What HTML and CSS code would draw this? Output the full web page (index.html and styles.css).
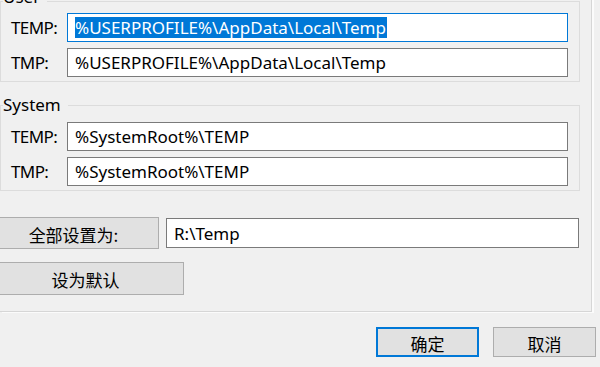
FILE: index.html
```html
<!DOCTYPE html>
<html lang="zh-CN">
<head>
<meta charset="utf-8">
<title>Temp</title>
<link rel="stylesheet" href="styles.css">
</head>
<body>
<div class="dialog">
  <div class="panel">
    <fieldset class="group group-user">
      <legend class="legend legend-user">User</legend>
      <div class="row">
        <span class="label">TEMP:</span>
        <div class="input input-focus"><span class="sel">%USERPROFILE%\AppData\Local\Temp</span></div>
      </div>
      <div class="row">
        <span class="label">TMP:</span>
        <div class="input">%USERPROFILE%\AppData\Local\Temp</div>
      </div>
    </fieldset>
    <fieldset class="group group-system">
      <legend class="legend">System</legend>
      <div class="row">
        <span class="label">TEMP:</span>
        <div class="input">%SystemRoot%\TEMP</div>
      </div>
      <div class="row">
        <span class="label">TMP:</span>
        <div class="input">%SystemRoot%\TEMP</div>
      </div>
    </fieldset>
    <div class="setall">
      <button class="btn btn-setall">全部设置为:</button>
      <div class="input input-setall">R:\Temp</div>
    </div>
    <button class="btn btn-default">设为默认</button>
  </div>
  <div class="footer">
    <button class="btn btn-foot btn-ok">确定</button>
    <button class="btn btn-foot">取消</button>
  </div>
</div>
</body>
</html>
```

FILE: styles.css
```css
html, body {
  margin: 0;
  padding: 0;
  background: #f0f0f0;
  overflow: hidden;
}
body {
  width: 600px;
  height: 367px;
  font-family: "Noto Sans", "Noto Sans CJK SC", sans-serif;
  font-size: 17px;
  color: #000;
}
.dialog {
  width: 600px;
  height: 367px;
  overflow: hidden;
}
.panel {
  width: 591px;
  margin-top: -13px;
  padding-bottom: 16px;
  border-right: 1px solid #d6d6d6;
  border-bottom: 1px solid #d6d6d6;
  box-shadow: 2px 1px 0 #fbfbfb;
}
.group {
  margin: 0;
  width: 580px;
  box-sizing: border-box;
  border: 1px solid #dcdcdc;
  padding: 0 11px 4px 9px;
  display: flex;
  flex-direction: column;
  gap: 6px;
  min-inline-size: 0;
}
.group-system {
  margin-top: 13px;
  padding-top: 7px;
}
.legend {
  padding: 0 7px 0 0;
  margin-left: -7px;
  line-height: 20px;
  font-size: 17px;
}
.legend-user {
  padding-bottom: 8px;
  margin-bottom: -2px;
}
.row {
  display: flex;
  align-items: center;
  height: 29px;
}
.label {
  width: 56px;
  padding-left: 1px;
  letter-spacing: -0.6px;
  flex: none;
}
.input {
  flex: 1;
  height: 29px;
  box-sizing: border-box;
  background: #fff;
  border: 1px solid #7a7a7a;
  padding-left: 7px;
  display: flex;
  align-items: center;
  white-space: nowrap;
  overflow: hidden;
}
.input-focus {
  border-color: #0078d7;
}
.sel {
  background: #0078d7;
  color: #fff;
  line-height: 21px;
  padding-right: 1px;
}
.btn {
  display: flex;
  align-items: center;
  justify-content: center;
  box-sizing: border-box;
  background: #e1e1e1;
  border: 1px solid #adadad;
  font-family: "Noto Sans CJK SC", sans-serif;
  font-size: 17px;
  color: #000;
  padding: 2px 0 0;
  margin: 0;
}
.setall {
  display: flex;
  align-items: center;
  gap: 7px;
  margin-top: 26px;
}
.btn-setall {
  width: 171px;
  height: 32px;
  margin-left: -12px;
  flex: none;
}
.input-setall {
  flex: none;
  width: 413px;
  height: 30px;
}
.btn-default {
  width: 197px;
  height: 33px;
  margin-left: -13px;
  margin-top: 13px;
}
.footer {
  display: flex;
  justify-content: flex-end;
  gap: 14px;
  padding-right: 4px;
  margin-top: 15px;
}
.btn-foot {
  width: 103px;
  height: 30px;
}
.btn-ok {
  border: 2px solid #0078d7;
}
```
